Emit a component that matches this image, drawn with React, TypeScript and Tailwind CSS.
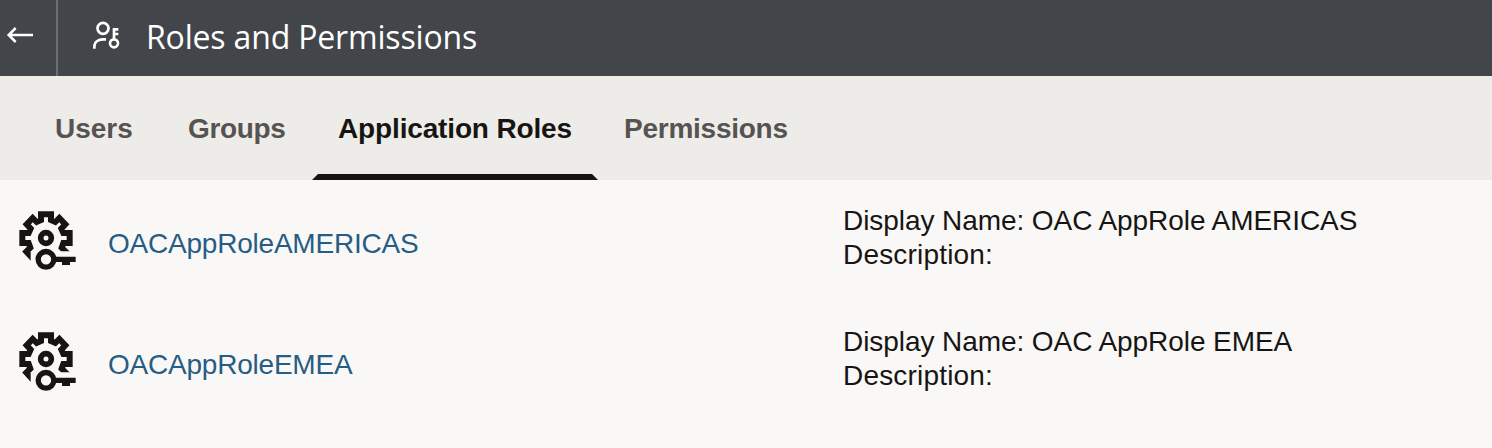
const roles = [
  { name: 'OACAppRoleAMERICAS', displayName: 'OAC AppRole AMERICAS' },
  { name: 'OACAppRoleEMEA', displayName: 'OAC AppRole EMEA' },
];

function BackArrow() {
  return (
    <svg viewBox="0 0 132 132" className="h-11 w-11" fill="none" stroke="white" strokeWidth="7.5">
      <path d="M99 63H27M47 42L26 63L47 84" />
    </svg>
  );
}

function UserKeyIcon() {
  return (
    <svg viewBox="0 0 132 132" className="h-11 w-11 shrink-0" fill="none" stroke="white" strokeWidth="8">
      <circle cx="51" cy="43" r="16.5" />
      <path d="M25 104V99C25 84 37 76 51 76H60" />
      <circle cx="84" cy="88" r="12" />
      <path d="M84 76V46H97M84 60H97" />
    </svg>
  );
}

function RoleIcon({ id }: { id: string }) {
  return (
    <svg viewBox="0 0 240 240" className="h-20 w-20 shrink-0 text-[#161513]" fill="none" stroke="currentColor">
      <clipPath id={id}>
        <path d="M0 0H240V154H62V200H0Z" />
      </clipPath>
      <path
        clipPath={`url(#${id})`}
        strokeWidth="18"
        d="M76 184L49 155L61 143L56 129H37V99H56L62 86L50 73L68 54L80 66L93 60V43H123V60L136 66L148 54L166 73L154 86L160 99H179V129H160L155 143L178 166"
      />
      <circle cx="108" cy="114" r="16" strokeWidth="17" />
      <circle cx="108" cy="178" r="23.5" strokeWidth="16" />
      <path d="M134 170H197V186H180V195H156V186H134Z" fill="currentColor" stroke="none" />
    </svg>
  );
}

export default function App() {
  return (
    <div className="flex h-[448px] w-full flex-col overflow-hidden bg-[#f9f8f6] font-['Liberation_Sans',sans-serif] text-[28px] text-[#161513]">
      <header className="flex h-[76px] shrink-0 bg-[#424549] text-white">
        <div className="flex w-[58px] shrink-0 border-r-2 border-[#6c6e72] pt-[14px]">
          <BackArrow />
        </div>
        <div className="flex pl-7 pt-[14px]">
          <UserKeyIcon />
          <h1 className="ml-4 h-[46px] whitespace-nowrap font-['Open_Sans',sans-serif] text-[32px] leading-[46px] tracking-[-0.17px]">
            Roles and Permissions
          </h1>
        </div>
      </header>

      <nav className="flex h-[104px] shrink-0 items-start bg-[#eeece8] pl-[55px] font-bold leading-[42px] text-[#555453]">
        <button className="w-[133px] pt-8 text-left">Users</button>
        <button className="w-[124px] pt-8 text-left tracking-[-0.35px]">Groups</button>
        <button className="flex h-full w-[286px] flex-col items-center justify-between text-[#161513]">
          <span className="pt-8 tracking-[-0.15px]">Application Roles</span>
          <span className="h-1.5 w-full bg-[#161513] [clip-path:polygon(6px_0,calc(100%_-_6px)_0,100%_100%,0_100%)]" />
        </button>
        <button className="ml-[26px] pt-8 text-left tracking-[-0.25px]">Permissions</button>
      </nav>

      <main className="pt-5">
        {roles.map((role) => (
          <div key={role.name} className="flex h-[121px] pl-[10px]">
            <RoleIcon id={`gear-${role.name}`} />
            <a className="ml-[18px] w-[735px] pt-[25px] leading-[38px] tracking-[-0.22px] text-[#275d85]">{role.name}</a>
            <div className="whitespace-nowrap pt-1 leading-[34px]">
              <p className="tracking-[-0.07px]">Display Name: {role.displayName}</p>
              <p className="tracking-[0.18px]">Description:</p>
            </div>
          </div>
        ))}
      </main>
    </div>
  );
}
